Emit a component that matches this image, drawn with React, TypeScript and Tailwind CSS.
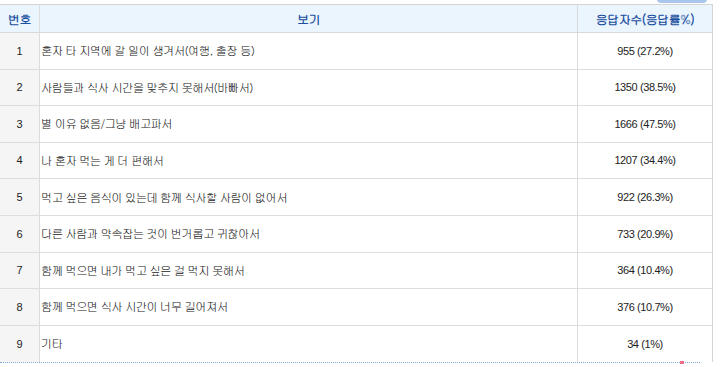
// 설문 응답 표 (보기별 응답자수)

const ROWS: { no: number; text: string; count: string }[] = [
  { no: 1, text: "혼자 타 지역에 갈 일이 생겨서(여행, 출장 등)", count: "955 (27.2%)" },
  { no: 2, text: "사람들과 식사 시간을 맞추지 못해서(바빠서)", count: "1350 (38.5%)" },
  { no: 3, text: "별 이유 없음/그냥 배고파서", count: "1666 (47.5%)" },
  { no: 4, text: "나 혼자 먹는 게 더 편해서", count: "1207 (34.4%)" },
  { no: 5, text: "먹고 싶은 음식이 있는데 함께 식사할 사람이 없어서", count: "922 (26.3%)" },
  { no: 6, text: "다른 사람과 약속잡는 것이 번거롭고 귀찮아서", count: "733 (20.9%)" },
  { no: 7, text: "함께 먹으면 내가 먹고 싶은 걸 먹지 못해서", count: "364 (10.4%)" },
  { no: 8, text: "함께 먹으면 식사 시간이 너무 길어져서", count: "376 (10.7%)" },
  { no: 9, text: "기타", count: "34 (1%)" },
];

const KR = "font-['Gulim','Noto_Sans_CJK_KR',sans-serif]";

export default function App() {
  return (
    <div className={`relative w-[720px] h-[367px] bg-white overflow-hidden ${KR} text-[12px] text-[#222]`}>
      {/* 위쪽에 살짝 보이는 탭 */}
      <div className="absolute left-[657px] top-[-6px] w-[50px] h-[9px] rounded-[4px] bg-[#a9c6ec]" />

      <div className="pt-[4px] w-[713px]">
        <div className="border-t border-[#d5d5d5] border-r border-r-[#d5d5d5]">
          {/* Header */}
          <div className="flex h-[28px] bg-[#eaf5fe] border-b border-[#d9d9d9] text-[#1b4fa0] font-bold tracking-[-0.5px]">
            <div className="w-[40px] shrink-0 flex items-center justify-center border-r border-[#dcdcdc]">번호</div>
            <div className="flex-1 flex items-center justify-center border-r border-[#dcdcdc]">보기</div>
            <div className="w-[134px] shrink-0 flex items-center justify-center">응답자수(응답률%)</div>
          </div>

          {ROWS.map((r) => (
            <div key={r.no} className="flex h-[36.6px] border-b border-[#dedede] last:border-b-0">
              <div className="w-[40px] shrink-0 flex items-center justify-center bg-[#f5f5f5] border-r border-[#dcdcdc] font-['Liberation_Sans',sans-serif] text-[11px]">
                {r.no}
              </div>
              <div className="flex-1 flex items-center pl-[1px] border-r border-[#dcdcdc] text-[11.5px] tracking-[-0.8px]">
                {r.text}
              </div>
              <div className="w-[134px] shrink-0 flex items-center justify-center font-['Liberation_Sans',sans-serif] text-[11px] tracking-[-0.4px]">
                {r.count}
              </div>
            </div>
          ))}
        </div>
        <div className="w-[700px] border-b border-dotted border-[#7fa6d8]" />
      </div>
      <div className="absolute left-[680px] top-[361px] w-[4px] h-[3px] bg-[#f06a8a]" />
    </div>
  );
}
